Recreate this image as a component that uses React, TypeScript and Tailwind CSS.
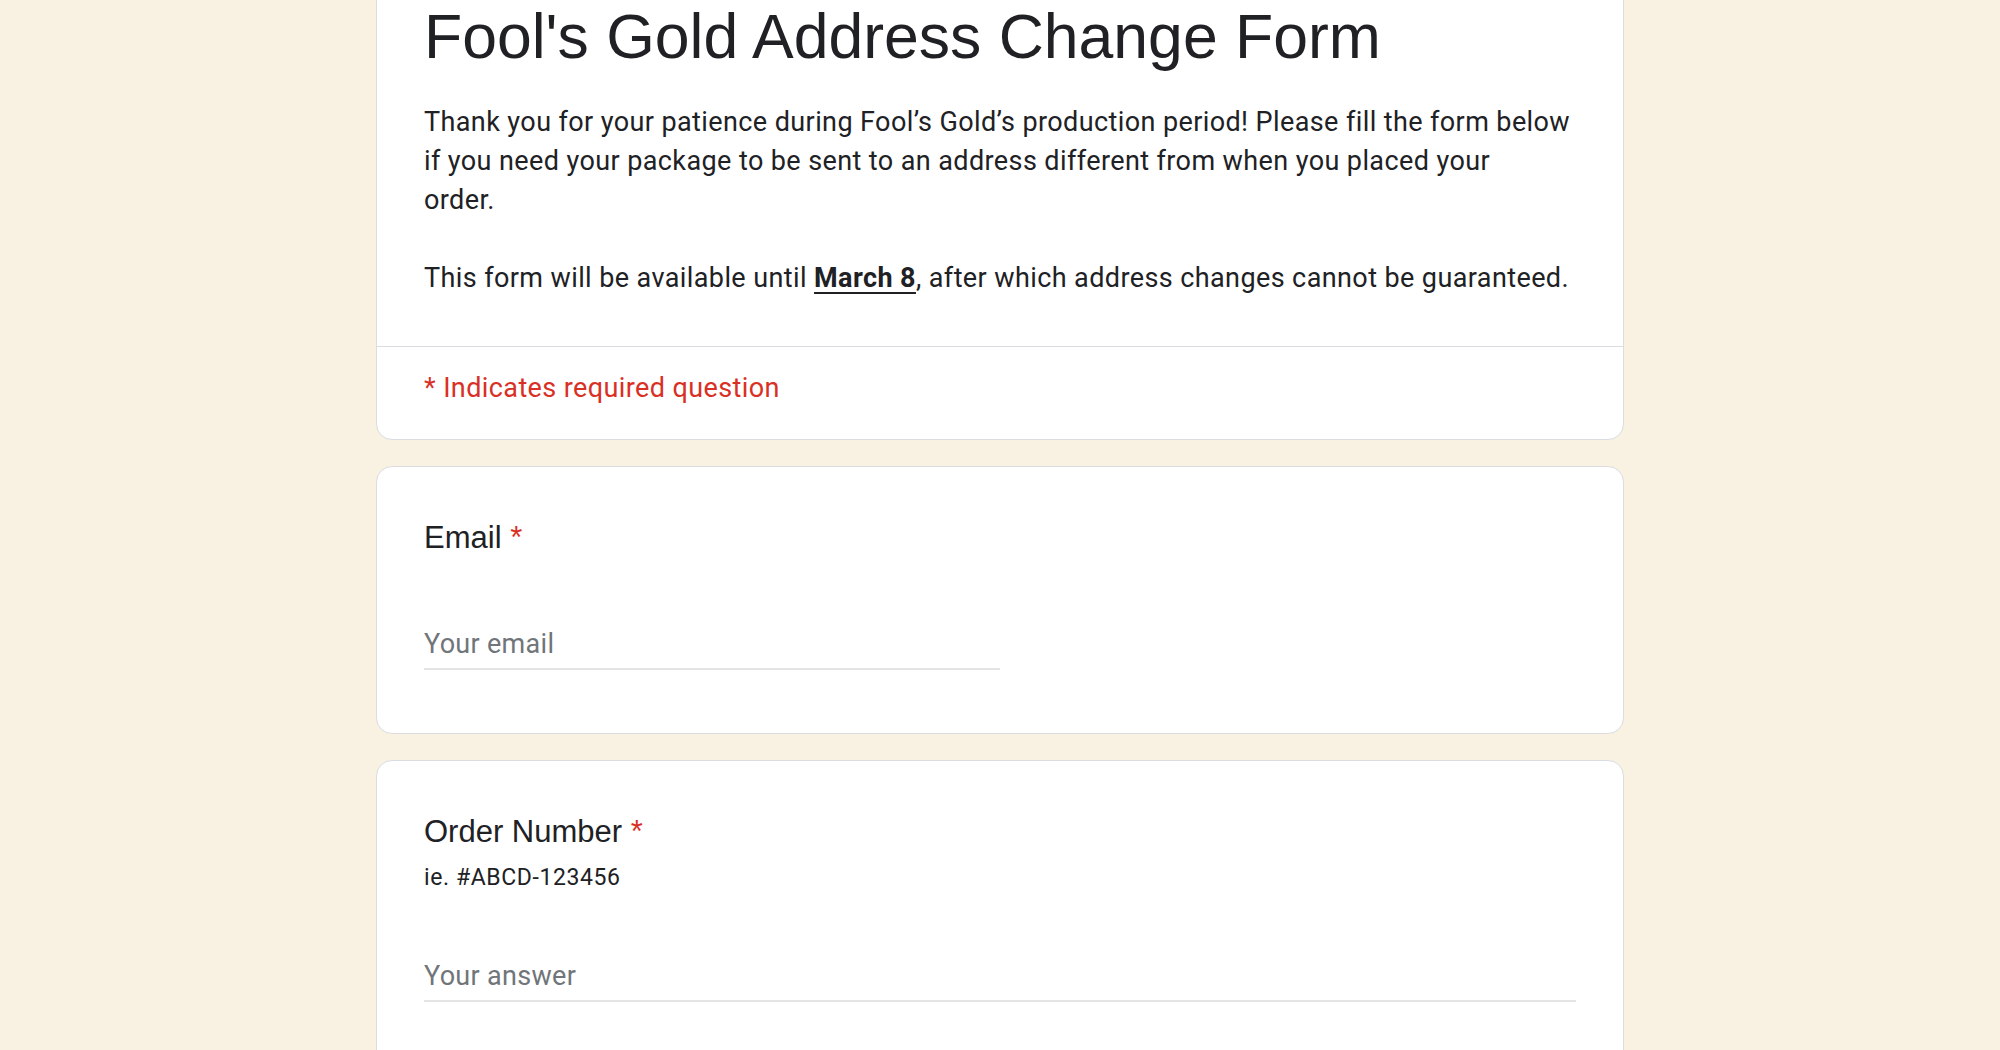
const sans = "font-['Liberation_Sans',Arial,sans-serif]"
const roboto = "font-['Roboto','Noto_Sans',sans-serif]"

function Required() {
  return <span className="text-[#d93025]"> *</span>
}

function TextQuestion({
  title,
  help,
  placeholder,
  half,
}: {
  title: string
  help?: string
  placeholder: string
  half?: boolean
}) {
  return (
    <div className="bg-white border border-[#dadce0] rounded-[16px] px-[47px] pt-[47px] pb-[63px]">
      <div className={`${sans} text-[31px] leading-[47px] text-[#202124]`}>
        {title}
        <Required />
      </div>
      {help && (
        <div className={`${roboto} mt-[5px] text-[23px] leading-[35px] tracking-[0.6px] text-[#202124]`}>
          {help}
        </div>
      )}
      <div
        className={`${help ? 'mt-[62px]' : 'mt-[64px]'} ${half ? 'w-1/2' : 'w-full'} border-b-2 border-[#e4e4e4] pb-[4px]`}
      >
        <div className={`${roboto} text-[27px] leading-[39px] tracking-[0.3px] text-[#70757a]`}>{placeholder}</div>
      </div>
    </div>
  )
}

export default function App() {
  return (
    <div className="min-h-screen w-full bg-[#f9f1e1] overflow-hidden">
      <div className="mx-auto w-[1248px] flex flex-col gap-[26px] -mt-[40px] pb-[40px]">
        <div className="bg-white border border-[#dadce0] rounded-[16px]">
          <div className="px-[47px] pt-[38px] pb-[48px] border-b border-[#dadce0]">
            <h1 className={`${sans} text-[62.5px] leading-[74px] text-[#202124]`}>
              Fool's Gold Address Change Form
            </h1>
            <div
              className={`${roboto} mt-[30px] text-[27px] leading-[39px] tracking-[0.4px] text-[#202124] whitespace-nowrap`}
            >
              <div>Thank you for your patience during Fool’s Gold’s production period! Please fill the form below</div>
              <div>if you need your package to be sent to an address different from when you placed your</div>
              <div>order.</div>
              <div>&nbsp;</div>
              <div>
                This form will be available until{' '}
                <span className="font-bold underline underline-offset-[5px]">March 8</span>, after which address
                changes cannot be guaranteed.
              </div>
            </div>
          </div>
          <div className={`${roboto} px-[47px] pt-[22px] pb-[31px] text-[27px] leading-[39px] tracking-[0.4px] text-[#d93025]`}>
            * Indicates required question
          </div>
        </div>

        <TextQuestion title="Email" placeholder="Your email" half />
        <TextQuestion title="Order Number" help="ie. #ABCD-123456" placeholder="Your answer" />
      </div>
    </div>
  )
}
